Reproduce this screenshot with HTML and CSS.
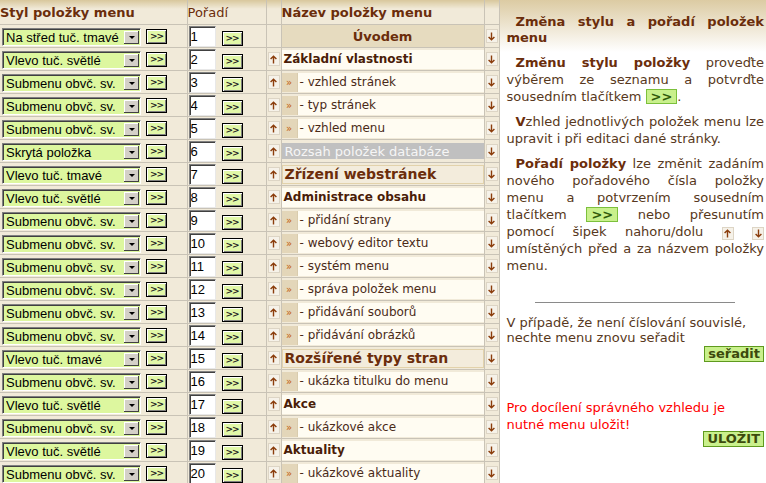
FILE: index.html
```html
<!DOCTYPE html>
<html lang="cs">
<head>
    <meta charset="UTF-8">
    <meta name="viewport" content="width=device-width, initial-scale=1.0">
    <title>Změna stylu a pořadí položek menu</title>
    <link rel="stylesheet" href="styles.css">
</head>
<body>
    <table class="menu-table">
        <colgroup>
            <col class="col-style">
            <col class="col-order">
            <col class="col-arrow">
            <col class="col-name">
            <col class="col-arrow">
        </colgroup>
        <thead>
            <tr>
                <th class="th-style">Styl položky menu</th>
                <th class="th-order">Pořadí</th>
                <th></th>
                <th class="th-name">Název položky menu</th>
                <th></th>
            </tr>
        </thead>
        <tbody id="rows"></tbody>
    </table>

    <div class="help">
        <h1>Změna stylu a pořadí položek menu</h1>
        <p><b>Změnu stylu položky</b> proveďte výběrem ze seznamu a potvrďte sousedním tlačítkem <span class="key">&gt;&gt;</span>.</p>
        <p><b>V</b>zhled jednotlivých položek menu lze upravit i při editaci dané stránky.</p>
        <p><b>Pořadí položky</b> lze změnit zadáním nového pořadového čísla položky menu a potvrzením sousedním tlačítkem <span class="key">&gt;&gt;</span> nebo přesunutím pomocí šipek nahoru/dolu <span class="arr arr-inline"><svg width="9" height="9" viewBox="0 0 9 9"><path d="M4.5 8.5V1.2M1.6 4.1L4.5 1.2L7.4 4.1" fill="none" stroke="#8b3d0c" stroke-width="1.4"/></svg></span> <span class="arr arr-inline"><svg width="9" height="9" viewBox="0 0 9 9"><path d="M4.5 0.5V7.8M1.6 4.9L4.5 7.8L7.4 4.9" fill="none" stroke="#8b3d0c" stroke-width="1.4"/></svg></span> umístěných před a za názvem položky menu.</p>
        <hr>
        <p class="plain">V případě, že není číslování souvislé, nechte menu znovu seřadit</p>
        <div class="actions"><button class="btn">seřadit</button></div>
        <p class="warn">Pro docílení správného vzhledu je nutné menu uložit!</p>
        <div class="actions actions-save"><button class="btn">ULOŽIT</button></div>
    </div>

    <script>
        const styles = ['Na střed tuč. tmavé', 'Vlevo tuč. tmavé', 'Vlevo tuč. světlé', 'Submenu obvč. sv.', 'Skrytá položka'];
        const nameClass = ['name-center', 'name-dark', 'name-light', 'name-sub', 'name-hidden'];
        const items = [
            [0, 'Úvodem'],
            [2, 'Základní vlastnosti'],
            [3, 'vzhled stránek'],
            [3, 'typ stránek'],
            [3, 'vzhled menu'],
            [4, 'Rozsah položek databáze'],
            [1, 'Zřízení webstránek'],
            [2, 'Administrace obsahu'],
            [3, 'přidání strany'],
            [3, 'webový editor textu'],
            [3, 'systém menu'],
            [3, 'správa položek menu'],
            [3, 'přidávání souborů'],
            [3, 'přidávání obrázků'],
            [1, 'Rozšířené typy stran'],
            [3, 'ukázka titulku do menu'],
            [2, 'Akce'],
            [3, 'ukázkové akce'],
            [2, 'Aktuality'],
            [3, 'ukázkové aktuality']
        ];

        const upIcon = '<span class="arr"><svg width="9" height="9" viewBox="0 0 9 9"><path d="M4.5 8.5V1.2M1.6 4.1L4.5 1.2L7.4 4.1" fill="none" stroke="#8b3d0c" stroke-width="1.4"/></svg></span>';
        const downIcon = '<span class="arr"><svg width="9" height="9" viewBox="0 0 9 9"><path d="M4.5 0.5V7.8M1.6 4.9L4.5 7.8L7.4 4.9" fill="none" stroke="#8b3d0c" stroke-width="1.4"/></svg></span>';

        const tbody = document.getElementById('rows');
        items.forEach(([style, title], i) => {
            const options = styles.map((s, n) => `<option${n === style ? ' selected' : ''}>${s}</option>`).join('');
            // submenu items get the » marker and a dash before the name
            const name = style === 3
                ? `<span class="sub-mark">»</span><span class="sub-text">- ${title}</span>`
                : title;
            const tr = document.createElement('tr');
            tr.innerHTML = `
                <td class="c-style"><span class="sel"><select>${options}</select><span class="sel-arrow"></span></span><button class="go">&gt;&gt;</button></td>
                <td class="c-order"><input class="order" type="text" value="${i + 1}"><button class="go go-order">&gt;&gt;</button></td>
                <td class="c-arrow">${i > 0 ? upIcon : ''}</td>
                <td class="c-name"><div class="name ${nameClass[style]}">${name}</div></td>
                <td class="c-arrow">${downIcon}</td>`;
            tbody.appendChild(tr);
        });
    </script>
</body>
</html>
```

FILE: styles.css
```css
body {
    margin: 0;
    display: flex;
    align-items: flex-start;
    font-family: "DejaVu Sans", Verdana, sans-serif;
    background: #fff;
}

/* ---- menu table ---- */
.menu-table {
    border-collapse: collapse;
    table-layout: fixed;
    width: 499px;
    flex: none;
    background: #f1ead9;
}
.col-style { width: 187px; }
.col-order { width: 79px; }
.col-arrow { width: 15px; }
.col-name { width: 203px; }

.menu-table th,
.menu-table td {
    border: 1px solid #c9c3b6;
    padding: 0;
    height: 22px;
    white-space: nowrap;
}
.menu-table tr > :first-child {
    border-left: 0;
}
.menu-table th {
    height: 24px;
    border-top: 0;
    text-align: left;
    font-size: 13px;
    color: #6b2d0b;
    background: linear-gradient(#d8c79c, #f1ead9 9px);
}
.th-style { padding-left: 3px; }
.th-order { padding-left: 2px; font-weight: normal; }
.th-name { padding-left: 2px; color: #5a2417; }

/* select with a classic dropdown button */
.sel {
    display: inline-flex;
    box-sizing: border-box;
    width: 139px;
    height: 18px;
    margin-left: 2px;
    vertical-align: middle;
    border: 1px solid;
    border-color: #808080 #fff #fff #808080;
    box-shadow: inset 1px 1px #404040;
    background: #ddf79f;
}
.sel select {
    appearance: none;
    -webkit-appearance: none;
    flex: 1;
    min-width: 0;
    border: 0;
    background: transparent;
    padding: 1px 0 0 3px;
    font: 13px "Liberation Sans", Arial, sans-serif;
    color: #000;
}
.sel-arrow {
    width: 15px;
    margin: 2px 1px 1px 0;
    display: flex;
    align-items: center;
    justify-content: center;
    background: #d4d0c8;
    box-shadow: inset -1px -1px #404040, inset 1px 1px #fff;
}
.sel-arrow::after {
    content: "";
    border-left: 3px solid transparent;
    border-right: 3px solid transparent;
    border-top: 3px solid #000;
}

.go {
    width: 21px;
    height: 15px;
    margin-left: 5px;
    padding: 0;
    vertical-align: middle;
    border: 1px solid #000;
    background: #e2f8a8;
    box-shadow: inset 1px 1px #fff, inset -1px -1px #808080;
    font: bold 9px "DejaVu Sans", sans-serif;
    letter-spacing: -1px;
    color: #222;
    line-height: 11px;
}
.go-order {
    margin-left: 6px;
    position: relative;
    top: 2px;
}

.order {
    box-sizing: border-box;
    width: 27px;
    height: 21px;
    margin-left: 1px;
    padding: 1px 1px 0;
    vertical-align: middle;
    border: 1px solid;
    border-color: #808080 #e8e8e8 #e8e8e8 #808080;
    box-shadow: inset 1px 1px #404040;
    background: #fff;
    font: 13px "Liberation Sans", Arial, sans-serif;
    color: #000;
}

/* arrows */
.arr {
    display: flex;
    align-items: center;
    justify-content: center;
    box-sizing: border-box;
    width: 12px;
    height: 14px;
    margin: 0 auto;
    background: #f6f2e9;
    border: 1px solid #ddd5c5;
}
.arr-inline {
    display: inline-flex;
    vertical-align: -2px;
    height: 13px;
}

/* name cell variants */
.c-name {
    vertical-align: middle;
}
.name {
    display: flex;
    align-items: center;
    box-sizing: border-box;
    height: 19px;
    overflow: hidden;
}
.name-center {
    height: 22px;
    justify-content: center;
    background: #e6dbbf;
    font-weight: bold;
    font-size: 13px;
    color: #6b2d0b;
}
.name-light {
    padding-left: 2px;
    background: #fffcf2;
    font-weight: bold;
    font-size: 12px;
    color: #4a1d08;
}
.name-dark {
    padding-left: 2px;
    background: #f3ecdc;
    border: 1px solid #e2d2ab;
    font-weight: bold;
    font-size: 14px;
    color: #6b2d0b;
}
.name-sub {
    align-items: stretch;
    font-size: 12px;
}
.sub-mark {
    width: 15px;
    flex: none;
    background: #e3d6b9;
    color: #c4610f;
    font-size: 10px;
    display: flex;
    align-items: center;
    justify-content: center;
}
.sub-text {
    flex: 1;
    display: flex;
    align-items: center;
    padding-left: 2px;
    background: #fffcf2;
    border-left: 1px solid #d9ccae;
    color: #4a2a18;
}
.name-hidden {
    height: 16px;
    padding-left: 3px;
    background: #c0c0c0;
    color: #f6f6f6;
    font-size: 13px;
}

/* ---- help panel ---- */
.help {
    flex: 1;
    min-width: 0;
    padding: 14px 2px 0 7px;
    background: linear-gradient(#dccba3, #fff 52px) no-repeat;
    color: #573820;
    font-size: 13px;
    line-height: 17px;
    text-align: justify;
}
.help h1 {
    margin: 0 0 8px;
    font-size: 13px;
    line-height: 16px;
    text-indent: 9px;
    color: #6b2d0b;
}
.help p {
    margin: 0 0 8px;
    text-indent: 9px;
}
.help b {
    color: #6b2d0b;
}
.key {
    display: inline-block;
    padding: 0 4px;
    line-height: 13px;
    text-indent: 0;
    background: #c9f08c;
    border: 1px solid #7cc03c;
    color: #2f5a0a;
    font-weight: bold;
}
.help hr {
    width: 200px;
    margin: 28px auto 12px;
    border: 0;
    border-top: 1px solid #8a8a8a;
}
.help .plain {
    text-indent: 0;
    text-align: left;
    line-height: 15px;
    margin: 0;
}
.help .warn {
    text-indent: 0;
    text-align: left;
    color: #ff0000;
    margin: 37px 0 0;
}
.actions {
    display: flex;
    justify-content: flex-end;
    margin-top: 1px;
}
.actions-save {
    margin-top: -2px;
}
.btn {
    padding: 0 3px;
    border: 1px solid #5f9a1e;
    background: #c9f08c;
    color: #3c4a0c;
    font: bold 13px "DejaVu Sans", Verdana, sans-serif;
    line-height: 14px;
}
```
